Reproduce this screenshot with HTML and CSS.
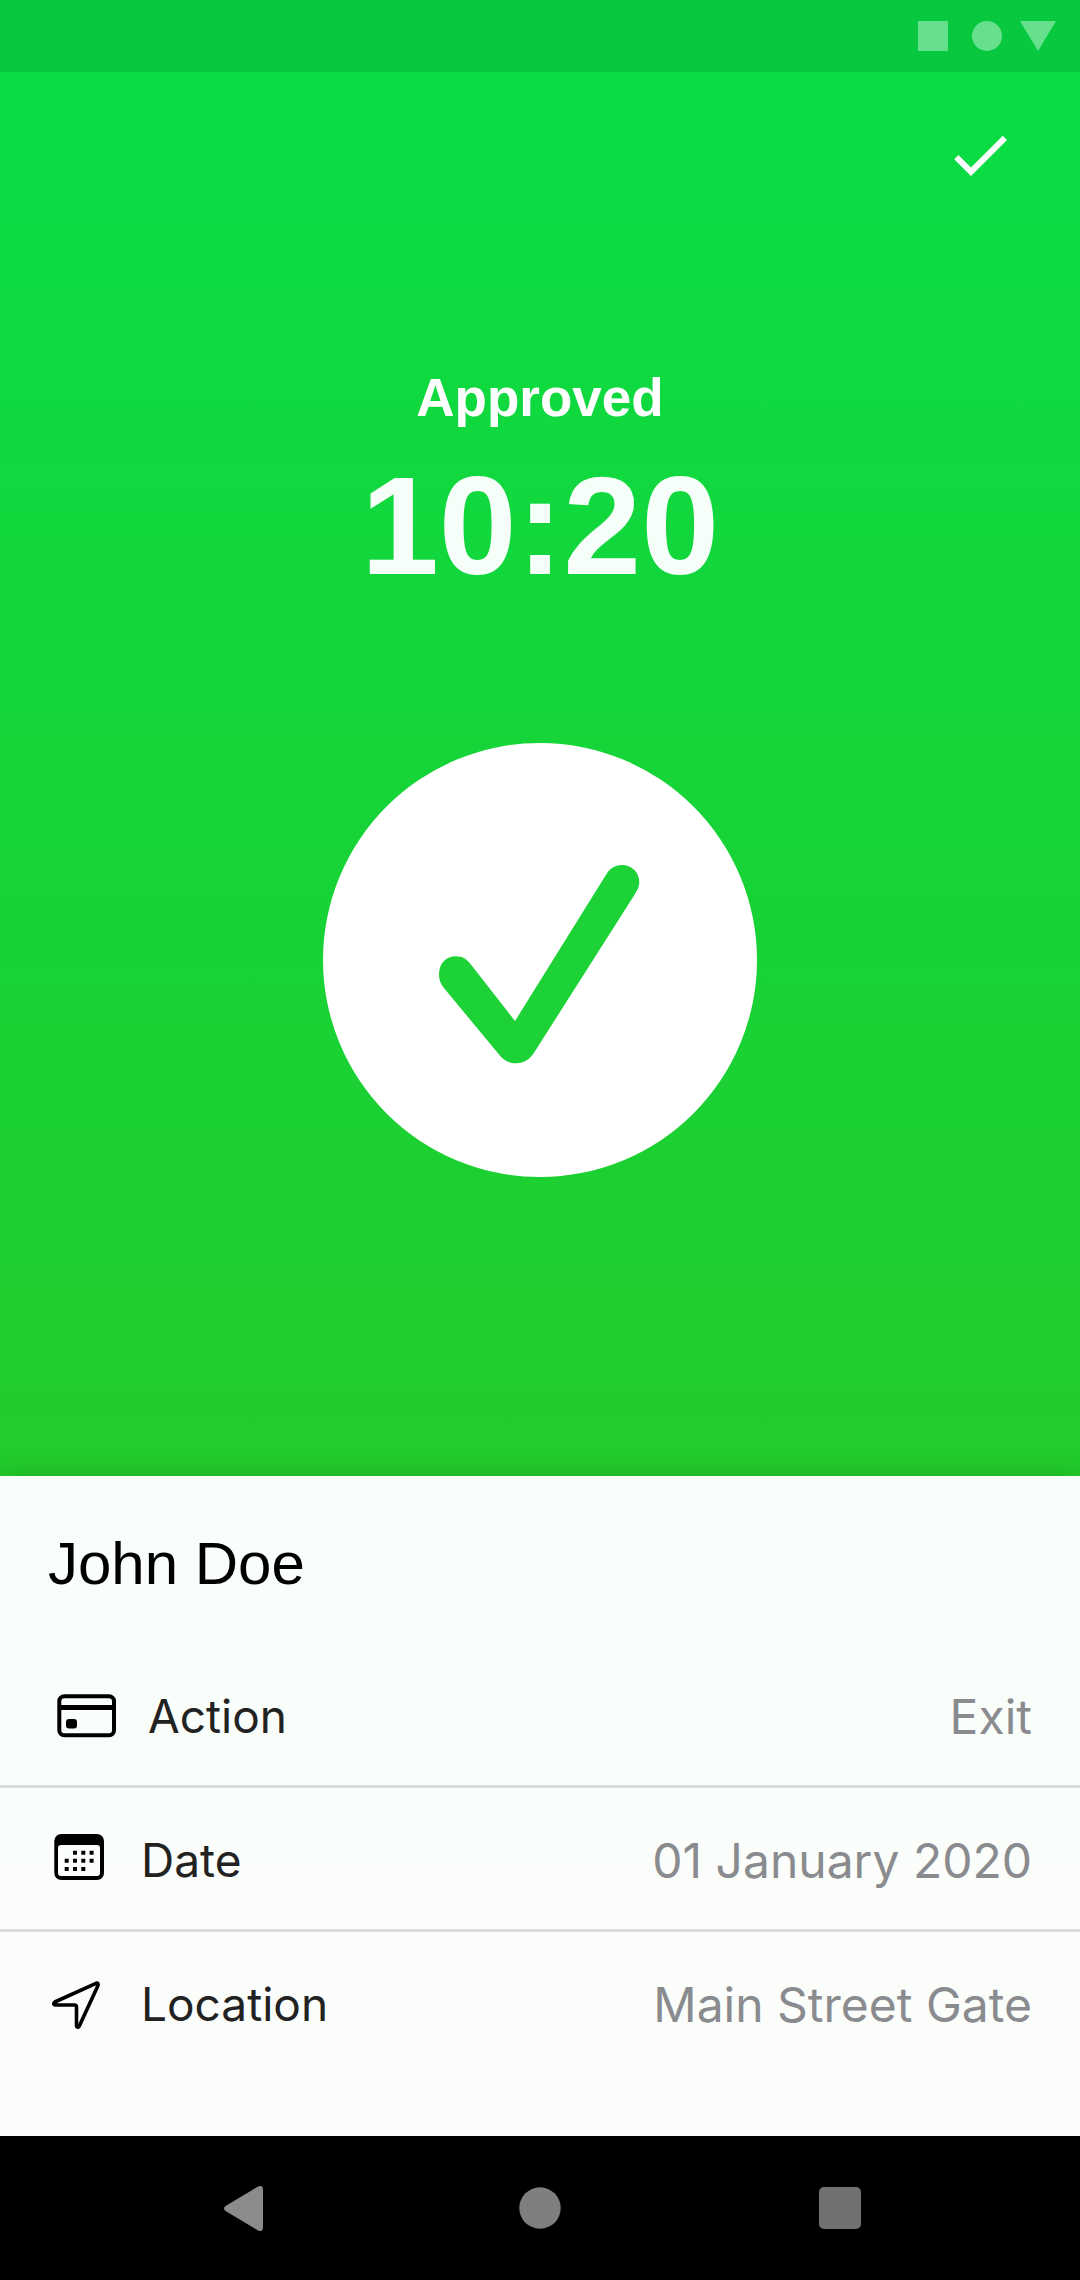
FILE: index.html
```html
<!DOCTYPE html>
<html lang="en">
<head>
  <meta charset="utf-8">
  <meta name="viewport" content="width=device-width, initial-scale=1">
  <title>Approved</title>
  <link rel="stylesheet" href="styles.css">
</head>
<body>
  <div class="screen">
    <div class="status-bar" aria-hidden="true">
      <svg class="status-icons" viewBox="0 0 138 30">
        <rect width="30" height="30"/>
        <circle cx="69" cy="15" r="15"/>
        <path d="M102 0h36l-18 30z"/>
      </svg>
    </div>

    <main class="hero">
      <header class="toolbar">
        <button class="done" type="button" aria-label="Done">
          <svg viewBox="0 0 24 24"><path d="M9 16.17 4.83 12l-1.42 1.41L9 19 21 7l-1.41-1.41z"/></svg>
        </button>
      </header>
      <h1 class="status">Approved</h1>
      <time class="time">10:20</time>
      <svg class="badge" viewBox="0 0 434 434" aria-hidden="true">
        <circle class="badge-disc" cx="217" cy="217" r="217"/>
        <path class="badge-check" d="M147.500 221 192 278 283.500 131C287 125.500 292 122 298.700 122 308.500 122 316.300 129 316.300 139 316.300 143.500 314.500 147 312 151L211.500 309C207 316 201.500 320.300 193 320.300 185.500 320.300 180.500 317 176 311.500L120.500 244.500C117.500 240.500 116 237 116 231.300 116 220.500 123 213.300 133 213.300 139.500 213.300 143.500 216 147.500 221z"/>
      </svg>
    </main>

    <section class="details">
      <h2 class="name">John Doe</h2>
      <dl class="rows">
        <div class="row">
          <dt class="label">
            <svg class="icon icon-card" viewBox="0 0 100 60" aria-hidden="true">
              <rect x="11.300" y="10.300" width="54.700" height="39" rx="5" fill="none" stroke="#000" stroke-width="4"/>
              <path d="M10 19h57v5H10z"/>
              <rect x="18" y="33" width="11" height="9.500" rx="3"/>
            </svg>
            Action
          </dt>
          <dd class="value">Exit</dd>
        </div>
        <div class="row">
          <dt class="label">
            <svg class="icon" viewBox="0 0 93 60" aria-hidden="true">
              <path fill-rule="evenodd" d="M13.300 4H49a7 7 0 0 1 7 7v32a7 7 0 0 1-7 7H13.300a7 7 0 0 1-7-7V11a7 7 0 0 1 7-7zM13 15a3 3 0 0 0-3 3v25a3 3 0 0 0 3 3h36a3 3 0 0 0 3-3V18a3 3 0 0 0-3-3z"/>
              <path d="M25 20.700h4v4h-4zm8.300 0h4v4h-4zm8.300 0h4v4h-4zM16.700 28.700h4v4h-4zm8.300 0h4v4h-4zm8.300 0h4v4h-4zm8.300 0h4v4h-4zM16.700 37h4v4h-4zm8.300 0h4v4h-4zm8.300 0h4v4h-4z"/>
            </svg>
            Date
          </dt>
          <dd class="value">01 January 2020</dd>
        </div>
        <div class="row">
          <dt class="label">
            <svg class="icon" viewBox="0 0 93 60" aria-hidden="true">
              <path fill="none" stroke="#000" stroke-width="3.600" stroke-linejoin="round" d="M48 9.300 6.800 28C5 29 5.500 31 7.500 31H26.500Q28.500 31 28.500 33V51.500C28.500 53.500 30.500 53.800 31.300 52L50 11.500C50.500 10 49.800 8.600 48 9.300z"/>
            </svg>
            Location
          </dt>
          <dd class="value">Main Street Gate</dd>
        </div>
      </dl>
    </section>

    <nav class="nav-bar" aria-label="System">
      <button class="nav-button" type="button" aria-label="Back">
        <svg viewBox="0 0 48 48"><path fill="#8b8b8b" d="M9.500 22 42 2.500Q47 .500 47 6V43Q47 48.500 42 46.500L9.500 27Q6.500 24.500 9.500 22z"/></svg>
      </button>
      <button class="nav-button" type="button" aria-label="Home">
        <svg viewBox="0 0 48 48"><circle cx="24" cy="24" r="20.700" fill="#7f7f7f"/></svg>
      </button>
      <button class="nav-button" type="button" aria-label="Recent apps">
        <svg viewBox="0 0 48 48"><rect x="3" y="3" width="42" height="42" rx="5" fill="#717171"/></svg>
      </button>
    </nav>
  </div>
</body>
</html>
```
FILE: styles.css
```css
* {
  box-sizing: border-box;
}

body,
h1,
h2,
dl,
dd {
  margin: 0;
}

body {
  font-family: "Liberation Sans", Arial, sans-serif;
}

button {
  padding: 0;
  border: 0;
  background: none;
  cursor: pointer;
}

svg {
  display: block;
}

.screen {
  display: flex;
  flex-direction: column;
  min-height: 100vh;
}

.status-bar {
  display: flex;
  align-items: center;
  justify-content: flex-end;
  height: 72px;
  padding-right: 24px;
  background: #08c840;
}

.status-icons {
  width: 138px;
  height: 30px;
  fill: #66e08c;
}

.hero {
  display: flex;
  flex: 1;
  flex-direction: column;
  align-items: center;
  padding-bottom: 48px;
  background: linear-gradient(#09dd45, #22cc2c);
}

.toolbar {
  display: flex;
  align-self: stretch;
  justify-content: flex-end;
  padding: 47px 64px 0;
}

.done svg {
  width: 72px;
  height: 72px;
  fill: #fff;
}

.status {
  margin-top: 175px;
  font-size: 53px;
  font-weight: 700;
  line-height: 64px;
  color: #fff;
}

.time {
  margin-top: 16px;
  font-size: 140px;
  font-weight: 700;
  line-height: 160px;
  color: #f5fef8;
}

.badge {
  width: 434px;
  height: 434px;
  margin-top: 137px;
}

.badge-disc {
  fill: #fff;
}

.badge-check {
  fill: #1cd236;
}

.details {
  padding: 52px 0 60px;
  background: linear-gradient(#f8fefa, #fcfdfb);
  box-shadow: 0 0 28px rgba(0, 0, 0, 0.16);
}

.name {
  padding: 0 48px 44px;
  font-size: 60px;
  font-weight: 400;
  line-height: 72px;
  color: #000;
}

.row {
  display: flex;
  align-items: center;
  justify-content: space-between;
  height: 144px;
  padding: 0 48px;
  border-top: 3px solid transparent;
  border-bottom: 3px solid #dadddb;
  font-family: Inter, Roboto, sans-serif;
}

.row:last-child {
  border-bottom-color: transparent;
}

.label {
  display: flex;
  align-items: center;
  font-size: 46px;
  color: #222;
}

.value {
  font-size: 48px;
  color: #8a8b8e;
}

.icon {
  width: 93px;
  height: 60px;
}

.icon-card {
  width: 100px;
}

.nav-bar {
  display: grid;
  grid-template-columns: repeat(3, 1fr);
  justify-items: center;
  height: 144px;
  padding: 0 90px;
  background: #000;
}

.nav-button svg {
  width: 48px;
  height: 48px;
}
```
